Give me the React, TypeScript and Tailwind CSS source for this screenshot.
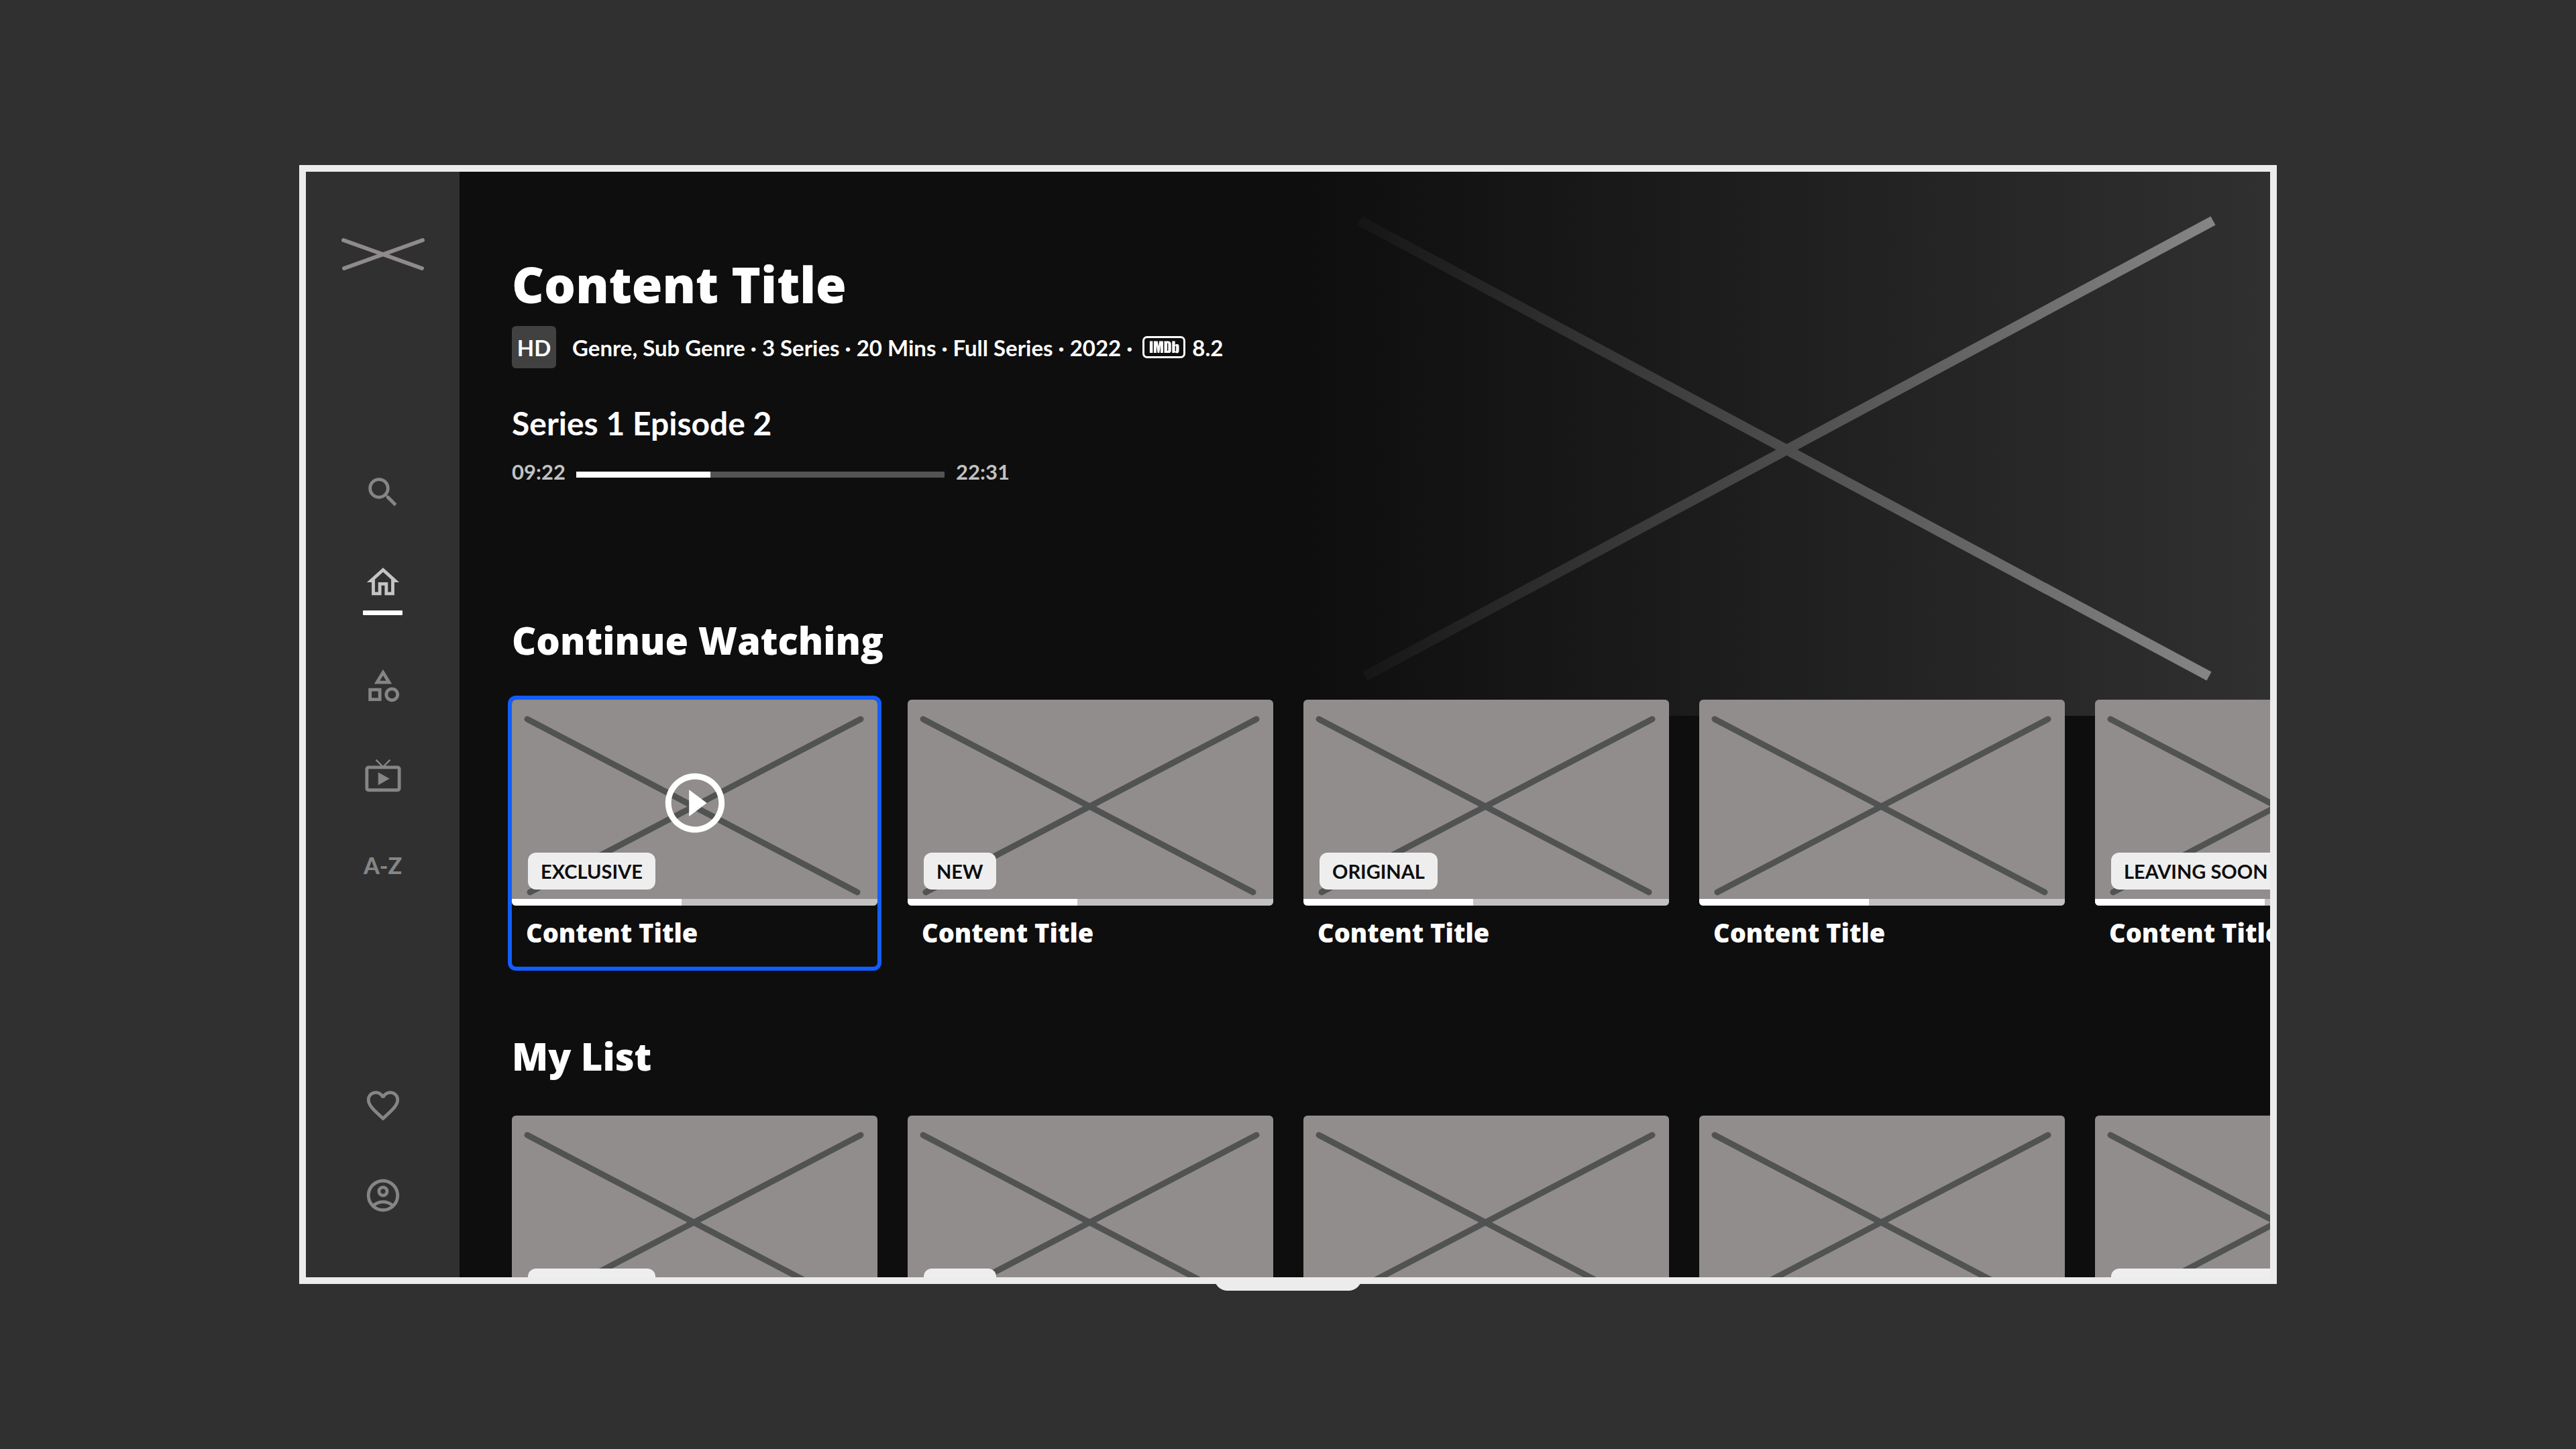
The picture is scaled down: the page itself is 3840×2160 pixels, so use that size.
import { ReactNode } from "react";
import {
  MdFavoriteBorder,
  MdLiveTv,
  MdOutlineAccountCircle,
  MdOutlineCategory,
  MdOutlineHome,
  MdPlayCircleOutline,
  MdSearch,
} from "react-icons/md";
import { SiImdb } from "react-icons/si";

type Item = { title: string; tag?: string; progress: number };

const watching: Item[] = [
  { title: "Content Title", tag: "EXCLUSIVE", progress: 46.5 },
  { title: "Content Title", tag: "NEW", progress: 46.5 },
  { title: "Content Title", tag: "ORIGINAL", progress: 46.5 },
  { title: "Content Title", progress: 46.5 },
  { title: "Content Title", tag: "LEAVING SOON", progress: 46.5 },
];

const myList: Item[] = [
  { title: "Content Title", tag: "EXCLUSIVE", progress: 46.5 },
  { title: "Content Title", tag: "NEW", progress: 46.5 },
  { title: "Content Title", progress: 46.5 },
  { title: "Content Title", progress: 46.5 },
  { title: "Content Title", tag: "LEAVING SOON", progress: 46.5 },
];

function Logo() {
  return (
    <svg viewBox="0 0 126 50" className="h-[50px] w-[126px]" fill="none" aria-hidden="true">
      <path
        d="M4 4 L121 46 M122 4 L5 46"
        stroke="#8f8b8a"
        strokeWidth="6"
        strokeLinecap="round"
      />
    </svg>
  );
}

function NavButton({ label, active, children }: { label: string; active?: boolean; children: ReactNode }) {
  return (
    <button
      type="button"
      aria-label={label}
      aria-current={active ? "page" : undefined}
      className={
        active
          ? "flex flex-col items-center gap-[13px] text-[#c4c4c4]"
          : "flex flex-col items-center text-[#858585]"
      }
    >
      <span className="flex h-[58px] items-center text-[58px]">{children}</span>
      {active && <span className="h-[7px] w-[59px] rounded-[1px] bg-white" />}
    </button>
  );
}

function Sidebar() {
  return (
    <nav className="flex w-[229px] shrink-0 flex-col items-center bg-[#303030] pt-[98px] pb-[93px]">
      <Logo />
      <div className="mt-[301px] flex flex-col items-center gap-[76px]">
        <NavButton label="Search">
          <MdSearch />
        </NavButton>
        <NavButton label="Home" active>
          <MdOutlineHome />
        </NavButton>
        <NavButton label="Categories">
          <MdOutlineCategory />
        </NavButton>
        <NavButton label="Live TV">
          <MdLiveTv />
        </NavButton>
        <NavButton label="A to Z">
          <span className="text-[34px] leading-[40px] font-black">A-Z</span>
        </NavButton>
      </div>
      <div className="mt-auto flex flex-col items-center gap-[76px]">
        <NavButton label="Favourites">
          <MdFavoriteBorder />
        </NavButton>
        <NavButton label="Account">
          <MdOutlineAccountCircle />
        </NavButton>
      </div>
    </nav>
  );
}

function HeroArt() {
  return (
    <svg
      viewBox="0 0 1442 811"
      className="absolute top-0 right-0 aspect-[1442/811] w-[1442px]"
      aria-hidden="true"
    >
      <defs>
        <linearGradient id="heroFade" x1="0" y1="0" x2="1" y2="0">
          <stop offset="0" stopColor="#0e0e0e" />
          <stop offset="1" stopColor="#0e0e0e" stopOpacity="0" />
        </linearGradient>
      </defs>
      <rect width="1442" height="811" fill="#303030" />
      <path d="M85 73 L1351 752 M1357 73 L93 752" stroke="#8d8d8d" strokeWidth="15" fill="none" />
      <rect width="1442" height="811" fill="url(#heroFade)" />
    </svg>
  );
}

function ImdbMark() {
  return (
    <span className="flex h-[33px] w-[64px] items-center justify-center rounded-[7px] border-[3px] border-white">
      <span className="flex h-[20px] w-[46px] items-center justify-center overflow-hidden">
        <SiImdb className="size-[57px] shrink-0" aria-label="IMDb" />
      </span>
    </span>
  );
}

function Hero() {
  return (
    <header className="pt-[128px]">
      <h1 className="font-['Open_Sans',sans-serif] text-[74px] leading-[80px] font-extrabold">Content Title</h1>
      <div className="mt-[22px] flex h-[63px] items-center text-[33px] leading-[40px] font-bold">
        <span className="flex h-full w-[66px] items-center justify-center rounded-[6px] bg-[#414141]">HD</span>
        <span className="ml-[24px]">Genre, Sub Genre · 3 Series · 20 Mins · Full Series · 2022 ·</span>
        <span className="ml-[15px] flex items-center gap-[10px]">
          <ImdbMark />
          8.2
        </span>
      </div>
      <h2 className="mt-[54px] text-[48px] leading-[56px] font-bold">Series 1 Episode 2</h2>
      <div className="mt-[24px] flex items-end text-[31px] leading-[40px] font-bold text-[#c2c2c2]">
        <span className="w-[96px]">09:22</span>
        <div
          role="progressbar"
          aria-label="Playback position"
          aria-valuenow={36}
          className="mb-[11px] h-[9px] w-[549px] bg-[#525352]"
        >
          <div className="h-full bg-white" style={{ width: "36.4%" }} />
        </div>
        <span className="ml-[17px]">22:31</span>
      </div>
    </header>
  );
}

function Thumbnail() {
  return (
    <svg viewBox="0 0 545 307" preserveAspectRatio="none" className="block size-full" aria-hidden="true">
      <path
        d="M23 29 L515 287 M520 29 L27 287"
        stroke="#515352"
        strokeWidth="9"
        strokeLinecap="round"
        fill="none"
      />
    </svg>
  );
}

function Card({ item, selected }: { item: Item; selected?: boolean }) {
  return (
    <li className="w-[545px] shrink-0">
      <a
        href="#"
        aria-current={selected ? "true" : undefined}
        className={
          selected
            ? "block rounded-[6px] pb-[27px] ring-6 ring-[#125dff]"
            : "block rounded-[6px] pb-[27px]"
        }
      >
        <div className="relative h-[307px] overflow-hidden rounded-[6px] bg-[#918d8c]">
          <Thumbnail />
          {selected && (
            <span className="absolute inset-0 flex items-center justify-center text-[106px] text-white">
              <MdPlayCircleOutline />
            </span>
          )}
          {item.tag && (
            <span className="absolute bottom-[24px] left-[24px] rounded-[12px] bg-[#eeeeee] px-[19px] text-[29px] leading-[55px] font-bold whitespace-nowrap text-[#0e0e0e]">
              {item.tag}
            </span>
          )}
          <div className="absolute inset-x-0 bottom-0 h-[10px] bg-[#c2c2c2]">
            <div className="h-full bg-white" style={{ width: `${item.progress}%` }} />
          </div>
        </div>
        <h3 className="mt-[16px] px-[21px] font-['Open_Sans',sans-serif] text-[38px] leading-[48px] font-extrabold">
          {item.title}
        </h3>
      </a>
    </li>
  );
}

type RowProps = { heading: string; items: Item[]; selected?: number; className: string };

function Row({ heading, items, selected, className }: RowProps) {
  return (
    <section className={className}>
      <h2 className="font-['Open_Sans',sans-serif] text-[56px] leading-[64px] font-extrabold">{heading}</h2>
      <ul className="mt-[57px] flex gap-[45px]">
        {items.map((item, i) => (
          <Card key={i} item={item} selected={i === selected} />
        ))}
      </ul>
    </section>
  );
}

export default function App() {
  return (
    <div className="flex h-screen flex-col bg-[#303030] px-[446px] py-[246px] font-['Lato',sans-serif] text-white">
      <div className="relative flex min-h-0 flex-1 border-[10px] border-[#ececec] bg-[#0e0e0e]">
        <Sidebar />
        <main className="relative min-w-0 flex-1 overflow-hidden">
          <HeroArt />
          <div className="relative pl-[78px]">
            <Hero />
            <Row heading="Continue Watching" items={watching} selected={0} className="mt-[199px]" />
            <Row heading="My List" items={myList} className="mt-[101px]" />
          </div>
        </main>
        <div className="absolute top-full left-1/2 h-[20px] w-[220px] -translate-x-1/2 rounded-b-[20px] bg-[#ececec]" />
      </div>
    </div>
  );
}
